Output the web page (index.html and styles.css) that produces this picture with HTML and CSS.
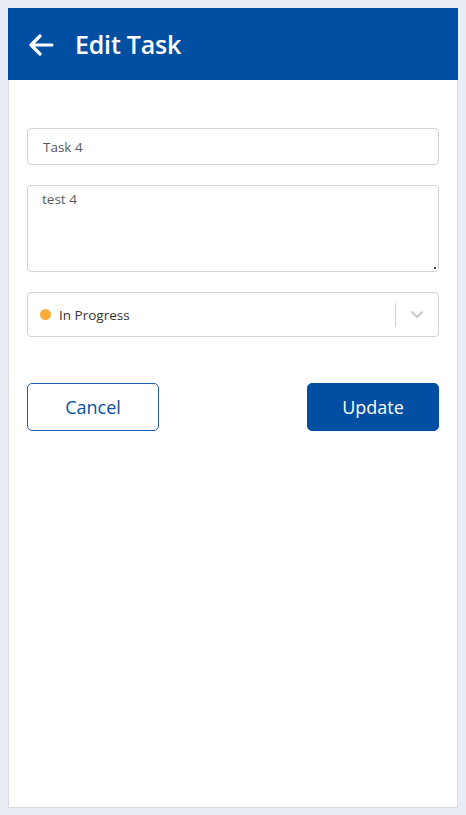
FILE: index.html
```html
<!DOCTYPE html>
<html>
<head>
<meta charset="utf-8">
<link rel="stylesheet" href="styles.css">
</head>
<body>
<div class="card">
  <header class="bar">
    <svg class="back" width="26" height="22" viewBox="0 0 26 22"><path d="M24 11H3M12 2L3 11l9 9" fill="none" stroke="#fff" stroke-width="3.2" stroke-linecap="round" stroke-linejoin="round"/></svg>
    <h1 class="title">Edit Task</h1>
  </header>
  <main class="form">
    <div class="field input">Task 4</div>
    <div class="field area">test 4<span class="grip"></span></div>
    <div class="field select">
      <span class="dot"></span>
      <span class="opt">In Progress</span>
      <span class="sep"></span>
      <svg class="chev" width="14" height="9" viewBox="0 0 14 9"><path d="M1.5 1.5L7 7l5.5-5.5" fill="none" stroke="#c8c8c8" stroke-width="2"/></svg>
    </div>
    <div class="actions">
      <button class="btn cancel">Cancel</button>
      <button class="btn update">Update</button>
    </div>
  </main>
</div>
</body>
</html>
```
FILE: styles.css
```css
html, body { margin: 0; padding: 0; }
body {
  background: #e9edf5;
  padding: 8px;
  font-family: "Open Sans", "Liberation Sans", sans-serif;
}
.card {
  box-sizing: border-box;
  width: 450px;
  height: 800px;
  background: #fff;
  border: 1px solid #d9dbe0;
  border-top: none;
}
.bar {
  background: #004fa3;
  height: 72px;
  margin: 0 -1px;
  display: flex;
  align-items: center;
  padding-left: 20px;
}
.back { margin-top: 1px; }
.title {
  margin: 0 0 0 21px;
  color: #fff;
  font-size: 25px;
  font-weight: 600;
  letter-spacing: -0.2px;
}
.form {
  padding: 48px 18px 0 18px;
  display: flex;
  flex-direction: column;
}
.field {
  box-sizing: border-box;
  border: 1px solid #d3d3d3;
  border-radius: 4px;
  font-size: 13.5px;
  color: #5a5a5a;
}
.input {
  height: 37px;
  padding: 0 15px;
  display: flex;
  align-items: center;
}
.area {
  margin-top: 20px;
  height: 87px;
  padding: 4px 14px;
  position: relative;
}
.grip {
  position: absolute;
  right: 2px;
  bottom: 2px;
  width: 2px;
  height: 2px;
  background: #444;
}
.select {
  margin-top: 20px;
  height: 45px;
  display: flex;
  align-items: center;
  padding: 0 14px 0 12px;
  color: #333;
}
.dot {
  width: 11px;
  height: 11px;
  border-radius: 50%;
  background: #fbab3c;
  margin-right: 8px;
}
.opt { flex: 1; }
.sep {
  width: 1px;
  height: 24px;
  background: #d3d3d3;
  margin-right: 14px;
}
.chev { display: block; }
.actions {
  margin-top: 46px;
  display: flex;
  justify-content: space-between;
}
.btn {
  box-sizing: border-box;
  width: 132px;
  height: 48px;
  border-radius: 5px;
  font-family: inherit;
  font-size: 18px;
  cursor: pointer;
}
.cancel {
  background: #fff;
  border: 1px solid #1c5fae;
  color: #0a4f9f;
}
.update {
  background: #004fa3;
  border: 1px solid #004fa3;
  color: #fff;
}
```
